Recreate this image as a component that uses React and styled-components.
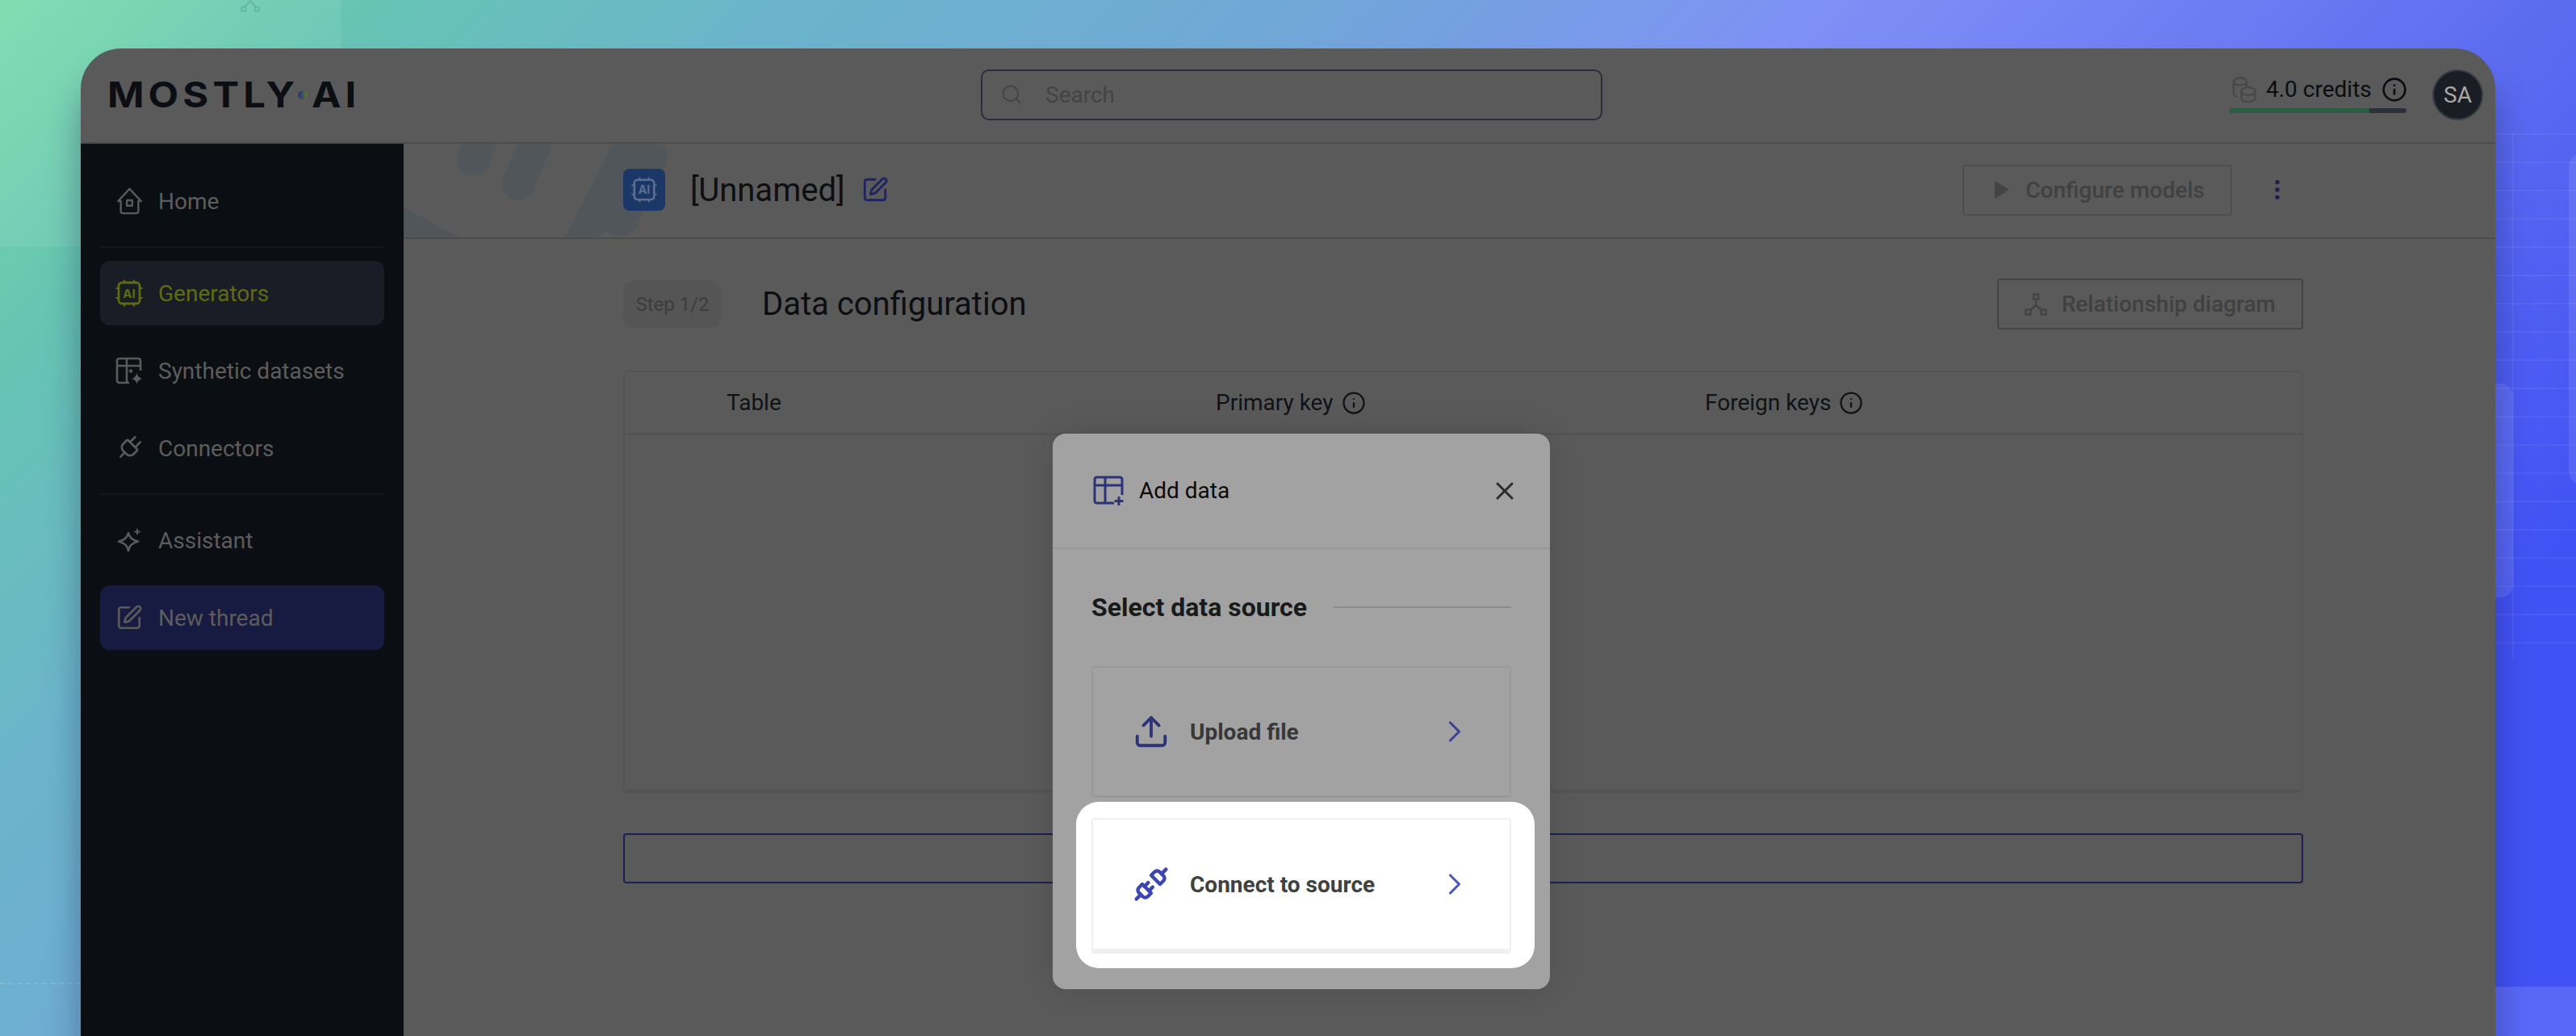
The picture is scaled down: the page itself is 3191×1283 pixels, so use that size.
import React from 'react';
import styled, { createGlobalStyle } from 'styled-components';
import { ChevronRight, EllipsisVertical, Info, Plug, Search, SquarePen, Unplug, Upload, X } from 'lucide-react';

const GlobalStyle = createGlobalStyle`
	html, body {
		margin: 0;
		padding: 0;
	}
	body {
		font-family: 'Roboto', 'Liberation Sans', sans-serif;
		overflow: hidden;
	}
	* {
		box-sizing: border-box;
	}
`;

const Page = styled.div`
	position: relative;
	width: 3191px;
	height: 1283px;
	padding: 60px 100px 0;
	overflow: hidden;
	background: linear-gradient(135deg, #78dcac 0%, #66c4b2 10%, #6cb4cc 22%, #70a8d6 36%, #7e90f6 51%, #5c6cf0 71%, #4152f5 86%, #4152f5 100%);
`;

const LeftPanel = styled.div`
	position: absolute;
	left: 0;
	top: 0;
	width: 423px;
	height: 306px;
	background: rgba(255, 255, 255, 0.07);
	svg {
		position: absolute;
		left: 298px;
		top: -10px;
	}
`;

const BottomBand = styled.div`
	position: absolute;
	left: 3000px;
	right: 0;
	top: 1222px;
	bottom: 0;
	background: rgba(255, 255, 255, 0.13);
`;

const DashLine = styled.div`
	position: absolute;
	left: 0;
	width: 100px;
	top: 1217px;
	border-top: 2px dashed rgba(255, 255, 255, 0.14);
`;

const GridLines = styled.div`
	position: absolute;
	left: 3060px;
	right: 0;
	top: 165px;
	height: 650px;
	background:
		repeating-linear-gradient(to bottom, rgba(255, 255, 255, 0.055) 0 2px, transparent 2px 35px),
		repeating-linear-gradient(to right, transparent 0 52px, rgba(255, 255, 255, 0.06) 52px 54px, transparent 54px 88px);
`;

const GhostCard = styled.div`
	position: absolute;
	left: ${p => p.$left}px;
	top: ${p => p.$top}px;
	width: ${p => p.$width}px;
	height: ${p => p.$height}px;
	border-radius: 16px;
	background: rgba(255, 255, 255, 0.1);
`;

const Window = styled.div`
	position: relative;
	display: flex;
	flex-direction: column;
	height: 1223px;
	background: #5a5a5a;
	border-radius: 50px 50px 0 0;
	box-shadow: 0 40px 40px rgba(20, 20, 60, 0.36);
`;

const TopBar = styled.header`
	display: flex;
	align-items: center;
	height: 118px;
	flex-shrink: 0;
	padding: 0 15px 2px 33px;
	border-bottom: 2px solid #4c4c4c;
`;

const Logo = styled.div`
	display: flex;
	align-items: center;
	width: 1082px;
	font-family: 'Inter', 'Liberation Sans', sans-serif;
	font-size: 44px;
	font-weight: 700;
	line-height: 1;
	letter-spacing: 4.6px;
	color: #0b0e13;
	transform: scaleX(1.11);
	transform-origin: left center;
`;

const LogoDot = styled.span`
	width: 10px;
	height: 11px;
	margin: 0 5px 0 -1px;
	border-radius: 50%;
	background: linear-gradient(to right, #272c80, #5a7d2a);
`;

const SearchBox = styled.div`
	display: flex;
	align-items: center;
	gap: 28px;
	width: 770px;
	height: 63px;
	padding-left: 22px;
	border: 2px solid #2b2e39;
	border-radius: 10px;
	font-size: 28px;
	color: #444;
	svg {
		color: #434343;
	}
`;

const Credits = styled.div`
	display: flex;
	flex-direction: column;
	gap: 7px;
	width: 219px;
	margin-left: auto;
	margin-right: 32px;
`;

const CreditsRow = styled.div`
	display: flex;
	align-items: center;
	gap: 12px;
	padding-left: 3px;
	height: 32px;
	font-size: 28px;
	color: #0b0d12;
	white-space: nowrap;
	svg {
		flex-shrink: 0;
	}
`;

const CreditsBar = styled.div`
	height: 6px;
	border-radius: 3px;
	overflow: hidden;
	background: #2d3038;
	div {
		height: 100%;
		background: #2a5d42;
	}
`;

const Avatar = styled.div`
	display: flex;
	align-items: center;
	justify-content: center;
	width: 63px;
	height: 63px;
	border: 2px solid #3a3d44;
	border-radius: 50%;
	background: #1a1d24;
	color: #a8a8a8;
	font-size: 28px;
`;

const Body = styled.div`
	display: flex;
	flex: 1;
	min-height: 0;
`;

const Sidebar = styled.nav`
	display: flex;
	flex-direction: column;
	gap: 16px;
	width: 400px;
	flex-shrink: 0;
	padding: 31px 24px 0;
	background: #0b0e13;
`;

const NavItem = styled.div`
	display: flex;
	align-items: center;
	gap: 19px;
	height: 80px;
	padding: 0 0 0 19px;
	border-radius: 12px;
	font-size: 28px;
	color: ${p => (p.$active ? '#5f6b14' : '#5d5d5d')};
	background: ${p => (p.$active ? '#1a1d25' : p.$accent ? '#171a41' : 'transparent')};
	svg {
		flex-shrink: 0;
		color: ${p => (p.$active ? '#5f6b14' : '#5a5a5a')};
	}
`;

const NavIcon = styled.span`
	display: flex;
	align-items: center;
	justify-content: center;
	width: 34px;
	height: 40px;
	flex-shrink: 0;
`;

const NavRule = styled.hr`
	width: 100%;
	height: 2px;
	margin: 0;
	border: 0;
	background: #14171d;
`;

const Main = styled.main`
	flex: 1;
	min-width: 0;
`;

const SubBar = styled.div`
	position: relative;
	display: flex;
	align-items: center;
	height: 118px;
	padding: 0 0 2px 272px;
	border-bottom: 2px solid #4c4c4c;
	overflow: hidden;
`;

const SubBarArt = styled.svg`
	position: absolute;
	left: 0;
	top: 0;
`;

const ItemBadge = styled.div`
	position: relative;
	display: flex;
	align-items: center;
	justify-content: center;
	width: 52px;
	height: 52px;
	border-radius: 8px;
	background: #1a3768;
	color: #5d6f8e;
`;

const ItemName = styled.h1`
	position: relative;
	margin: 0 20px 0 31px;
	font-size: 40px;
	font-weight: 400;
	color: #0e0f12;
`;

const EditButton = styled.span`
	position: relative;
	display: flex;
	color: #1f2363;
`;

const GhostButton = styled.div`
	position: relative;
	display: flex;
	align-items: center;
	justify-content: center;
	gap: ${p => p.$gap}px;
	height: 63px;
	padding: 0 32px 0 ${p => p.$left}px;
	border: 2px solid ${p => p.$line};
	border-radius: 4px;
	font-size: 28px;
	font-weight: 500;
	color: #414141;
	svg {
		color: #444;
	}
`;

const SubActions = styled.div`
	display: flex;
	align-items: center;
	gap: 40px;
	margin-left: auto;
	margin-right: 254px;
`;

const Kebab = styled.span`
	display: flex;
	color: #1d1e50;
`;

const Content = styled.section`
	padding: 49px 238px 0 272px;
`;

const StepRow = styled.div`
	display: flex;
	align-items: center;
	height: 63px;
`;

const StepPill = styled.div`
	display: flex;
	align-items: center;
	justify-content: center;
	width: 122px;
	height: 60px;
	border-radius: 16px;
	background: #555;
	font-size: 24px;
	color: #3c3c3c;
`;

const StepTitle = styled.h2`
	margin: 0 auto 0 50px;
	font-size: 40px;
	font-weight: 400;
	color: #0c0e12;
`;

const DataTable = styled.div`
	height: 523px;
	margin-top: 51px;
	border: 2px solid #545454;
	border-bottom-width: 4px;
	border-radius: 6px;
`;

const TableHead = styled.div`
	display: grid;
	grid-template-columns: 606px 606px 1fr;
	align-items: center;
	height: 78px;
	padding-left: 126px;
	border-bottom: 3px solid #545454;
	font-size: 28px;
	color: #101216;
`;

const HeadCell = styled.div`
	display: flex;
	align-items: center;
	gap: 10px;
`;

const AddRow = styled.div`
	height: 62px;
	margin-top: 50px;
	border: 2px solid #1e1f50;
	border-radius: 4px;
`;

const Modal = styled.div`
	position: absolute;
	left: 1204px;
	top: 477px;
	width: 616px;
	height: 688px;
	border-radius: 16px;
	background: #a2a2a2;
	box-shadow: 0 0 40px rgba(0, 0, 0, 0.12);
`;

const ModalHead = styled.div`
	display: flex;
	align-items: center;
	height: 143px;
	padding: 0 38px 0 50px;
	border-bottom: 2px solid #999;
	font-size: 28px;
	color: #0a0a0a;
`;

const ModalTitleIcon = styled.span`
	display: flex;
	margin-right: 17px;
	color: #2d3379;
`;

const CloseButton = styled.span`
	display: flex;
	margin-left: auto;
	color: #2b2b2b;
`;

const ModalBody = styled.div`
	padding: 52px 48px 0;
`;

const SectionTitle = styled.div`
	display: flex;
	align-items: center;
	gap: 32px;
	height: 40px;
	font-size: 32px;
	font-weight: 700;
	color: #1a1a1a;
	white-space: nowrap;
	&::after {
		content: '';
		flex: 1;
		height: 2px;
		background: #8c8c8c;
	}
`;

const SourceCard = styled.div`
	display: flex;
	align-items: center;
	height: ${p => p.$height}px;
	margin-top: ${p => p.$top}px;
	padding: 0 46px 0 52px;
	border: 2px solid ${p => (p.$lit ? '#f0f0f0' : '#999')};
	border-bottom-width: ${p => (p.$lit ? 6 : 3)}px;
	border-radius: 3px;
	font-size: 28px;
	font-weight: 700;
	color: ${p => (p.$lit ? '#414141' : '#383838')};
`;

const SourceIcon = styled.span`
	display: flex;
	justify-content: center;
	width: 40px;
	margin-right: 28px;
	color: ${p => (p.$lit ? '#3c46b0' : '#2d3379')};
	svg {
		flex-shrink: 0;
	}
`;

const SourceArrow = styled.span`
	display: flex;
	margin-left: auto;
	color: ${p => (p.$lit ? '#4b55c0' : '#3c4296')};
`;

const Spotlight = styled.div`
	margin: 5px -29px 0 -19px;
	padding: 20px 29px 18px 19px;
	border-radius: 28px;
	background: #fff;
`;

const HomeIcon = () => (
	<svg width='33' height='34' viewBox='0 0 34 36' fill='none' stroke='currentColor' strokeWidth='2.6' strokeLinejoin='round'>
		<path d='M17 2 L32 18 L28.5 18 V31 Q28.5 34 25.5 34 H8.5 Q5.5 34 5.5 31 V18 L2 18 Z' />
		<rect x='13.5' y='17' width='7' height='7' />
	</svg>
);

const ChipIcon = ({ size = 34 }) => (
	<svg width={size} height={size} viewBox='0 0 34 34' fill='none' stroke='currentColor' strokeWidth='2.8'>
		<rect x='4' y='4' width='26' height='26' rx='4' />
		<path d='M11 0.5v3 M23 0.5v3 M11 30.5v3 M23 30.5v3 M0.5 11h3 M0.5 23h3 M30.5 11h3 M30.5 23h3' strokeWidth='2' />
		<text x='17' y='22.5' textAnchor='middle' fontFamily='Inter, sans-serif' fontSize='15' fontWeight='700' fill='currentColor' stroke='none'>
			AI
		</text>
	</svg>
);

const TableSparkIcon = () => (
	<svg width='34' height='34' viewBox='0 0 34 34' fill='none' stroke='currentColor' strokeWidth='2.6'>
		<path d='M17 32 H5 Q2 32 2 29 V5 Q2 2 5 2 H28 Q31 2 31 5 V17 M2 11 H31 M14 2 V32' />
		<path d='M26.5 20 Q27.5 25 33 27 Q27.5 28.5 26.5 33.5 Q25.5 28.5 20.5 27 Q25.5 25 26.5 20 Z' fill='currentColor' stroke='none' />
		<path d='M19 15v5 M16.5 17.5h5' strokeWidth='1.8' />
	</svg>
);

const SparkIcon = () => (
	<svg width='30' height='30' viewBox='0 0 30 30' fill='none' stroke='currentColor' strokeWidth='2.6' strokeLinejoin='round'>
		<path d='M14 6 Q15.5 14 26 16.5 Q15.5 19 14 28 Q12.5 19 2 16.5 Q12.5 14 14 6 Z' />
		<path d='M25 1v7 M21.5 4.5h7' strokeWidth='2' />
	</svg>
);

const CoinsIcon = () => (
	<svg width='30' height='32' viewBox='0 0 30 32' fill='none' stroke='#484848' strokeWidth='2.4'>
		<ellipse cx='10' cy='6' rx='8' ry='4.5' />
		<path d='M2 6 V20 Q2 24 6 25 M18 6 V13' />
		<ellipse cx='20' cy='18' rx='8.5' ry='5' />
		<path d='M11.5 18 V26 Q11.5 31 20 31 Q28.5 31 28.5 26 V18' />
	</svg>
);

const DiagramIcon = () => (
	<svg width='28' height='28' viewBox='0 0 28 28' fill='none' stroke='currentColor' strokeWidth='2.4'>
		<rect x='11' y='1.5' width='6' height='6' />
		<rect x='1.5' y='20.5' width='6' height='6' />
		<rect x='20.5' y='20.5' width='6' height='6' />
		<path d='M14 7.5 V15 L7 21 M14 15 L21 21' />
	</svg>
);

const TablePlusIcon = () => (
	<svg width='40' height='38' viewBox='0 0 40 38' fill='none' stroke='currentColor' strokeWidth='3'>
		<path d='M26 34 H5 Q2 34 2 31 V5 Q2 2 5 2 H33 Q36 2 36 5 V24 M2 12 H36 M15 2 V34' />
		<path d='M32 26 V37 M26.5 31.5 H37.5' />
	</svg>
);

const PlayIcon = () => (
	<svg width='18' height='22' viewBox='0 0 18 22' fill='currentColor'>
		<path d='M0 0 L18 11 L0 22 Z' />
	</svg>
);

const TiltedPlug = styled(Plug)`
	transform: rotate(45deg);
`;

const App = () => (
	<Page>
		<GlobalStyle />
		<LeftPanel>
			<svg width='24' height='26' viewBox='0 0 28 28' fill='none' stroke='#5cab9f' strokeWidth='2' opacity='0.7'>
				<rect x='1.5' y='20.5' width='6' height='6' />
				<rect x='20.5' y='20.5' width='6' height='6' />
				<path d='M14 0 V12 L5 21 M14 12 L23 21' />
			</svg>
		</LeftPanel>
		<BottomBand />
		<DashLine />
		<GridLines />
		<GhostCard $left={3182} $top={190} $width={40} $height={410} />
		<GhostCard $left={3040} $top={475} $width={73} $height={265} />
		<Window>
			<TopBar>
				<Logo>
					MOSTLY
					<LogoDot />
					AI
				</Logo>
				<SearchBox>
					<Search size={28} strokeWidth={1.6} />
					Search
				</SearchBox>
				<Credits>
					<CreditsRow>
						<CoinsIcon />
						<span>4.0 credits</span>
						<Info size={32} strokeWidth={2} />
					</CreditsRow>
					<CreditsBar>
						<div style={{ width: '79%' }} />
					</CreditsBar>
				</Credits>
				<Avatar>SA</Avatar>
			</TopBar>
			<Body>
				<Sidebar>
					<NavItem>
						<NavIcon><HomeIcon /></NavIcon>
						Home
					</NavItem>
					<NavRule />
					<NavItem $active>
						<NavIcon><ChipIcon /></NavIcon>
						Generators
					</NavItem>
					<NavItem>
						<NavIcon><TableSparkIcon /></NavIcon>
						Synthetic datasets
					</NavItem>
					<NavItem>
						<NavIcon><TiltedPlug size={36} strokeWidth={1.8} /></NavIcon>
						Connectors
					</NavItem>
					<NavRule />
					<NavItem>
						<NavIcon><SparkIcon /></NavIcon>
						Assistant
					</NavItem>
					<NavItem $accent>
						<NavIcon><SquarePen size={34} strokeWidth={1.9} /></NavIcon>
						New thread
					</NavItem>
				</Sidebar>
				<Main>
					<SubBar>
						<SubBarArt width='400' height='116' viewBox='0 0 400 116' fill='#50565a'>
							<path d='M97 -8 L85 20' stroke='#50565a' strokeWidth='40' strokeLinecap='round' />
							<path d='M166 -8 L142 50' stroke='#50565a' strokeWidth='40' strokeLinecap='round' />
							<path d='M259 0 H300 Q330 0 326 22 L290 100 Q275 122 250 108 L240 116 H200 Z' />
							<path d='M0 79 L69 116 H0 Z' />
						</SubBarArt>
						<ItemBadge><ChipIcon size={32} /></ItemBadge>
						<ItemName>[Unnamed]</ItemName>
						<EditButton><SquarePen size={34} strokeWidth={2} /></EditButton>
						<SubActions>
							<GhostButton $gap={20} $left={38} $line='#4f4f4f'>
								<PlayIcon />
								Configure models
							</GhostButton>
							<Kebab><EllipsisVertical size={32} strokeWidth={2} /></Kebab>
						</SubActions>
					</SubBar>
					<Content>
						<StepRow>
							<StepPill>Step 1/2</StepPill>
							<StepTitle>Data configuration</StepTitle>
							<GhostButton $gap={18} $left={32} $line='#444'>
								<DiagramIcon />
								Relationship diagram
							</GhostButton>
						</StepRow>
						<DataTable>
							<TableHead>
								<HeadCell>Table</HeadCell>
								<HeadCell>Primary key <Info size={30} strokeWidth={1.8} /></HeadCell>
								<HeadCell>Foreign keys <Info size={30} strokeWidth={1.8} /></HeadCell>
							</TableHead>
						</DataTable>
						<AddRow />
					</Content>
				</Main>
			</Body>
			<Modal>
				<ModalHead>
					<ModalTitleIcon><TablePlusIcon /></ModalTitleIcon>
					Add data
					<CloseButton><X size={36} strokeWidth={2} /></CloseButton>
				</ModalHead>
				<ModalBody>
					<SectionTitle>Select data source</SectionTitle>
					<SourceCard $height={163} $top={53}>
						<SourceIcon><Upload size={46} strokeWidth={2} /></SourceIcon>
						Upload file
						<SourceArrow><ChevronRight size={44} strokeWidth={1.7} /></SourceArrow>
					</SourceCard>
					<Spotlight>
						<SourceCard $lit $height={168} $top={0}>
							<SourceIcon $lit><Unplug size={44} strokeWidth={2.4} /></SourceIcon>
							Connect to source
							<SourceArrow $lit><ChevronRight size={44} strokeWidth={1.7} /></SourceArrow>
						</SourceCard>
					</Spotlight>
				</ModalBody>
			</Modal>
		</Window>
	</Page>
);

export default App;
